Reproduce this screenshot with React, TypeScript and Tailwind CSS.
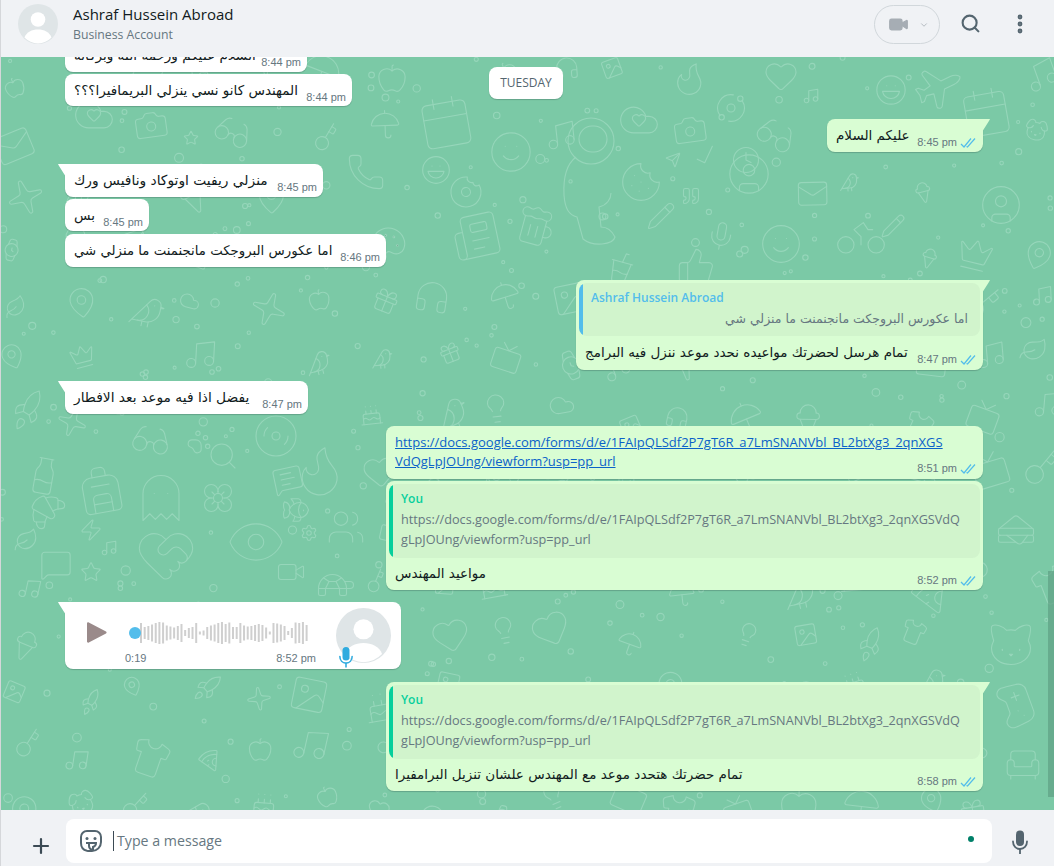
import React from "react";
import {
  Calendar, Newspaper, Donut, Laugh, Beer, Cookie, Camera, Cloud, Heart, Orbit, Glasses, CircleUser, Pencil, Mic, ThumbsUp, Music, Send, Check, CupSoda, Quote, Smile, Milk, Backpack, Croissant, Ghost, PawPrint, Search, Flower, MessageSquareText, Fish, Users, Settings, HeartHandshake, Disc3, Eye, Zap, Leaf, MessageSquare, Star, Sparkle, Cat, Gamepad2, Armchair, Turtle, Video, Plane, Phone, Bike, Sandwich, Flame, Apple, Umbrella, Gift, Key, Lightbulb, Clock, MapPin, Rocket, Crown, Dog, Bird, Shirt, Pizza, IceCreamCone, Cake, Watch, Tv, Headphones, Image, Mail, Palette, Plus, EllipsisVertical, ChevronDown,
} from "lucide-react";

const AR = { fontFamily: '"DejaVu Sans", "Noto Sans", sans-serif' };

type D = [any, number, number, number, number];
const placed: D[] = [
  [Calendar, 445, 122, 58, -10], [Newspaper, 475, 236, 50, -12], [Donut, 465, 192, 36, -15], [Laugh, 435, 170, 32, 0], [Beer, 535, 226, 44, 15],
  [Smile, 510, 152, 46, 0], [Cookie, 640, 182, 44, 0], [Camera, 689, 130, 36, -8], [Cloud, 638, 120, 44, 0], [Heart, 638, 120, 16, 0], [Orbit, 730, 108, 32, 0],
  [Heart, 780, 76, 36, 0], [Glasses, 775, 135, 42, 30], [CircleUser, 748, 174, 46, 0], [Pencil, 660, 216, 30, 0], [Mic, 720, 236, 32, 10], [ThumbsUp, 695, 266, 40, 0],
  [Music, 810, 96, 18, 0], [Send, 672, 160, 16, 0], [Check, 705, 156, 28, -20], [CupSoda, 620, 268, 36, 15], [Quote, 690, 196, 20, 0], [Smile, 780, 244, 44, 0], [Flame, 690, 78, 40, 20],
  [Plane, 935, 88, 50, 20], [Calendar, 985, 112, 54, -10], [Laugh, 890, 90, 34, 0], [Bike, 860, 232, 56, 0], [Pencil, 892, 226, 26, 0], [Clock, 745, 160, 30, 0],
  [Milk, 43, 476, 42, 10], [Backpack, 100, 490, 54, -10], [Croissant, 47, 512, 40, 0], [Ghost, 160, 498, 54, 0], [PawPrint, 198, 442, 26, 0], [Search, 222, 456, 32, 0], [Flower, 217, 498, 36, 0], [MessageSquareText, 287, 480, 32, -12],
  [Fish, 295, 510, 30, 0], [Users, 345, 527, 40, 0], [Settings, 308, 533, 18, 0], [HeartHandshake, 165, 555, 64, 0], [Disc3, 275, 436, 48, 0], [Glasses, 150, 440, 42, 10], [Eye, 255, 542, 62, 0], [Zap, 90, 530, 24, 0], [Leaf, 25, 540, 26, 0],
  [Music, 108, 548, 18, 0], [MessageSquare, 55, 565, 34, 0], [Star, 90, 572, 22, 0], [Cat, 1010, 645, 52, 0], [Gamepad2, 1015, 705, 50, 70], [Armchair, 1022, 765, 42, 0], [Turtle, 335, 585, 42, 0], [Video, 290, 572, 30, 0],
  [Sandwich, 1015, 530, 42, 0], [Camera, 150, 125, 36, -8], [Cloud, 93, 115, 44, 0], [Heart, 93, 115, 16, 0], [Star, 190, 138, 16, 0], [Glasses, 232, 132, 40, 25], [Phone, 365, 172, 40, 0], [Flame, 320, 470, 60, 10],
  [CircleUser, 1000, 205, 44, 0],
];
const pool = [Star, Umbrella, Gift, Key, Lightbulb, MapPin, Rocket, Crown, Dog, Bird, Shirt, Pizza, IceCreamCone, Cake, Watch, Tv, Headphones, Image, Mail, Palette, Apple, Sparkle, Heart, Cloud, Leaf, Music];

function buildDoodles() {
  let seed = 17;
  const rnd = () => ((seed = (seed * 16807) % 2147483647) - 1) / 2147483646;
  const all: D[] = [...placed].map((d) => [d[0], d[1], d[2] - 57, d[3], d[4]] as D);
  for (let y = 10; y < 760; y += 56) {
    for (let x = 8; x < 1054; x += 60) {
      const s = 22 + rnd() * 20;
      const px = x + rnd() * 24;
      const py = y + rnd() * 24;
      const clash = all.some((d) => Math.hypot(d[1] - px, d[2] - py) < (d[3] + s) / 2 + 6);
      const ic = pool[Math.floor(rnd() * pool.length)];
      const r = (rnd() - 0.5) * 50;
      if (!clash) all.push([ic, px, py, s, r]);
    }
  }
  const dots: [number, number, number][] = [];
  for (let i = 0; i < 900 && dots.length < 330; i++) {
    const cx = rnd() * 1054;
    const cy = rnd() * 753;
    const r = 1.5 + rnd() * rnd() * 3.5;
    if (!all.some((d) => Math.hypot(d[1] - cx, d[2] - cy) < d[3] / 2 + 3)) dots.push([cx, cy, r]);
  }
  return { all, dots };
}
const { all, dots } = buildDoodles();

function Doodles() {
  return (
    <svg className="absolute inset-0 h-full w-full" width="1054" height="753" aria-hidden="true">
      {all.map(([Ic, x, y, s, r], i) => (
        <g key={i} transform={`translate(${x} ${y}) rotate(${r})`}>
          <Ic x={-s / 2} y={-s / 2} width={s} height={s} size={s} absoluteStrokeWidth strokeWidth={1.1} color="#96d6ba" />
        </g>
      ))}
      <g fill="none" stroke="#96d6ba" strokeWidth="1.1">
        {dots.map(([x, y, r], i) => (
          <circle key={i} cx={x} cy={y} r={r} />
        ))}
        <circle cx="590" cy="84" r="23" />
        <path d="M575 100c-8 6-13 18-12 38 1 14 5 20 13 22l6 22c10 8 30 6 32-2-4-8-10-10-14-10l-2-20c8-2 12-8 12-14" />
        <rect x="578" y="69" width="28" height="26" rx="13" />
      </g>
    </svg>
  );
}

function Ticks() {
  return (
    <svg width="16" height="11" viewBox="0 0 16 11" fill="none" stroke="#53bdeb" strokeWidth="1.25" className="ml-[3px] shrink-0">
      <path d="M1 7l3 3L11 1.5" />
      <path d="M6.5 9.5l1 .5L15 1.5" />
    </svg>
  );
}

function Time({ t, read, cls = "" }: { t: string; read?: boolean; cls?: string }) {
  return (
    <span className={`flex shrink-0 items-center whitespace-nowrap text-[11px] leading-[15px] text-[#667781] ${cls}`} style={{ fontFamily: '"Liberation Sans", sans-serif' }}>
      {t}
      {read && <Ticks />}
    </span>
  );
}

function Tail({ side, color }: { side: "l" | "r"; color: string }) {
  return side === "l" ? (
    <svg width="8" height="13" viewBox="0 0 8 13" className="absolute left-[-7px] top-0">
      <path d="M0 0h8v13L1.2 2.2C.7 1.3 .2 .6 0 0z" fill={color} />
    </svg>
  ) : (
    <svg width="8" height="13" viewBox="0 0 8 13" className="absolute right-[-7px] top-0">
      <path d="M8 0H0v13l6.8-10.8C7.3 1.3 7.8 .6 8 0z" fill={color} />
    </svg>
  );
}

function MicGlyph({ color, w, h, cls }: { color: string; w: number; h: number; cls: string }) {
  return (
    <svg width={w} height={h} viewBox="0 0 16 24" className={cls}>
      <rect x="4" y="0.500" width="8" height="15.500" rx="4" fill={color} />
      <path d="M1 11.500c0 4.500 3 7.500 7 7.500s7-3 7-7.500" fill="none" stroke={color} strokeWidth="1.800" strokeLinecap="round" />
      <path d="M8 19v5" stroke={color} strokeWidth="1.800" />
    </svg>
  );
}

const inBubble = "relative rounded-[8px] shadow-[0_1px_1px_rgba(11,20,26,0.2)] bg-white";
const outBubble = "relative self-end rounded-[8px] shadow-[0_1px_1px_rgba(11,20,26,0.2)] bg-[#d9fdd3]";

function Quote2({ name, color, bar, children, cls }: { name: string; color: string; bar: string; children: React.ReactNode; cls: string }) {
  return (
    <div className={`flex overflow-hidden rounded-[8px] bg-[#d1f4cc] ${cls}`}>
      <div className={`w-[4px] shrink-0 ${bar}`} />
      <div className="flex-1 pl-[8px] pr-[12px]">
        <div className={`pt-[5px] text-[12px] font-semibold leading-[19px] ${color}`}>{name}</div>
        {children}
      </div>
    </div>
  );
}

const URL_LINES = ["https://docs.google.com/forms/d/e/1FAIpQLSdf2P7gT6R_a7LmSNANVbl_BL2btXg3_2qnXGSVdQ", "gLpJOUng/viewform?usp=pp_url"];

function Avatar({ size }: { size: number }) {
  return (
    <svg width={size} height={size} viewBox="0 0 40 40" className="shrink-0">
      <circle cx="20" cy="20" r="20" fill="#dfe5e7" />
      <circle cx="20" cy="15.500" r="7.300" fill="#fff" />
      <path d="M6.500 33.500C8.500 28 14 25.500 20 25.500s11.500 2.500 13.500 8A20 20 0 0 1 20 39.500a20 20 0 0 1-13.500-6z" fill="#fff" />
    </svg>
  );
}

function Wave() {
  const h = [20, 12, 14, 17, 20, 22, 21, 15, 13, 11, 14, 18, 6, 10, 12, 20, 3, 5, 12, 15, 17, 20, 22, 18, 21, 12, 12, 20, 15, 13, 14, 16, 18, 16, 11, 3, 20, 19, 17, 14, 4, 10, 21, 20, 22, 16];
  return (
    <svg width="172" height="26" viewBox="0 0 172 26">
      {h.map((v, i) => (
        <rect key={i} x={1 + i * 3.68} y={13 - v / 2} width="2" height={v} fill="#cfcfcf" />
      ))}
    </svg>
  );
}

export default function App() {
  return (
    <div className="flex h-[866px] w-[1054px] flex-col overflow-hidden border-l border-[#d5d7da] bg-[#f0f2f5]" style={{ fontFamily: '"Open Sans", sans-serif' }}>
      <header className="flex h-[57px] shrink-0 items-start bg-[#f0f2f5] pl-[17px] pr-[22px]">
        <div className="pt-[4px]"><Avatar size={40} /></div>
        <div className="ml-[15px] flex-1 pt-[4px]">
          <div className="text-[15px] leading-[21px] text-[#111b21]">Ashraf Hussein Abroad</div>
          <div className="mt-[1px] text-[12.250px] leading-[18px] text-[#667781]">Business Account</div>
        </div>
        <div className="mt-[5px] flex h-[39px] w-[66px] items-center rounded-full border border-[#d1d7db] pl-[13px]">
          <Video size={21} fill="#a6adb4" color="#a6adb4" strokeWidth={1.5} />
          <ChevronDown size={10} color="#aab1b7" className="ml-[10px]" />
        </div>
        <Search size={21} color="#54656f" strokeWidth={2.400} className="ml-[20px] mt-[13px]" />
        <EllipsisVertical size={24} color="#54656f" strokeWidth={2.800} className="ml-[27px] mt-[12px]" />
      </header>

      <main className="relative flex min-h-0 flex-1 flex-col overflow-hidden bg-[#7bc9a6] pl-[64px] pr-[71px]">
        <Doodles />
        <div className="relative flex flex-col items-start">
          <div className={`${inBubble} -mt-[18px] flex h-[33px] w-[242px] items-center justify-between pl-[9px] pr-[6px]`}>
            <span dir="rtl" className="text-[13.500px] leading-[19px] text-[#111b21]" style={AR}>السلام عليكم ورحمة الله وبركاته</span>
            <Time t="8:44 pm" cls="mt-[14px]" />
          </div>
          <div className={`${inBubble} mt-[2px] flex h-[32px] w-[287px] items-center justify-between pl-[9px] pr-[6px]`}>
            <span dir="rtl" className="text-[13.500px] leading-[19px] text-[#111b21]" style={AR}>المهندس كانو نسي ينزلي البريمافيرا؟؟؟</span>
            <Time t="8:44 pm" cls="mt-[14px]" />
          </div>

          <div className={`${outBubble} mt-[13px] flex h-[33px] w-[156px] items-center justify-between rounded-tr-none pl-[9px] pr-[7px]`}>
            <Tail side="r" color="#d9fdd3" />
            <span dir="rtl" className="text-[13.500px] leading-[19px] text-[#111b21]" style={AR}>عليكم السلام</span>
            <Time t="8:45 pm" read cls="mt-[14px]" />
          </div>

          <div className={`${inBubble} mt-[12px] flex h-[33px] w-[258px] items-center justify-between rounded-tl-none pl-[9px] pr-[6px]`}>
            <Tail side="l" color="#ffffff" />
            <span dir="rtl" className="text-[13.800px] leading-[19px] text-[#111b21]" style={AR}>منزلي ريفيت اوتوكاد ونافيس ورك</span>
            <Time t="8:45 pm" cls="mt-[14px]" />
          </div>
          <div className={`${inBubble} mt-[2px] flex h-[32px] w-[84px] items-center justify-between pl-[9px] pr-[6px]`}>
            <span dir="rtl" className="text-[13.500px] leading-[19px] text-[#111b21]" style={AR}>بس</span>
            <Time t="8:45 pm" cls="mt-[14px]" />
          </div>
          <div className={`${inBubble} mt-[3px] flex h-[33px] w-[321px] items-center justify-between pl-[9px] pr-[6px]`}>
            <span dir="rtl" className="text-[13.300px] leading-[19px] text-[#111b21]" style={AR}>اما عكورس البروجكت مانجنمنت ما منزلي شي</span>
            <Time t="8:46 pm" cls="mt-[14px]" />
          </div>

          <div className={`${outBubble} mt-[13px] h-[90px] w-[407px] rounded-tr-none p-[3px]`}>
            <Tail side="r" color="#d9fdd3" />
            <Quote2 name="Ashraf Hussein Abroad" color="text-[#53bdeb]" bar="bg-[#53bdeb]" cls="h-[53px]">
              <div dir="rtl" className="pt-[2px] text-[12.500px] leading-[19px] text-[#667781]" style={AR}>اما عكورس البروجكت مانجنمنت ما منزلي شي</div>
            </Quote2>
            <div className="flex items-start justify-between pl-[6px] pr-[4px] pt-[7px]">
              <span dir="rtl" className="text-[13.500px] leading-[19px] text-[#111b21]" style={AR}>تمام هرسل لحضرتك مواعيده نحدد موعد ننزل فيه البرامج</span>
              <Time t="8:47 pm" read cls="mt-[9px]" />
            </div>
          </div>

          <div className={`${inBubble} mt-[11px] flex h-[33px] w-[243px] items-center justify-between rounded-tl-none pl-[9px] pr-[6px]`}>
            <Tail side="l" color="#ffffff" />
            <span dir="rtl" className="text-[13.800px] leading-[19px] text-[#111b21]" style={AR}>يفضل اذا فيه موعد بعد الافطار</span>
            <Time t="8:47 pm" cls="mt-[14px]" />
          </div>

          <div className={`${outBubble} mt-[12px] h-[53px] w-[597px] pl-[9px] pr-[7px] pt-[7px]`}>
            <div className="text-[13px] leading-[19px] text-[#0b62c9] underline">
              https://docs.google.com/forms/d/e/1FAIpQLSdf2P7gT6R_a7LmSNANVbl_BL2btXg3_2qnXGS
              <br />
              VdQgLpJOUng/viewform?usp=pp_url
            </div>
            <div className="absolute bottom-[3px] right-[7px]"><Time t="8:51 pm" read /></div>
          </div>

          <div className={`${outBubble} mt-[2px] h-[109px] w-[597px] p-[3px]`}>
            <Quote2 name="You" color="text-[#06cf9c]" bar="bg-[#06cf9c]" cls="h-[74px]">
              <div className="pt-[1px] text-[12.680px] leading-[20px] text-[#667781]">{URL_LINES[0]}<br />{URL_LINES[1]}</div>
            </Quote2>
            <div className="flex items-start justify-between pl-[6px] pr-[4px] pt-[6px]">
              <span dir="rtl" className="text-[13.500px] leading-[19px] text-[#111b21]" style={AR}>مواعيد المهندس</span>
              <Time t="8:52 pm" read cls="mt-[9px]" />
            </div>
          </div>

          <div className={`${inBubble} mt-[12px] flex h-[67px] w-[336px] rounded-tl-none pl-[22px]`}>
            <Tail side="l" color="#ffffff" />
            <svg width="20" height="21" viewBox="0 0 20 21" className="mt-[20px] shrink-0">
              <path d="M0 1.500C0 .5 1 0 1.800 .5L19 9.500c.8.500 .8 1.500 0 2L1.800 20.500C1 21 0 20.500 0 19.500z" fill="#9a8a8a" />
            </svg>
            <div className="relative ml-[18px] w-[191px]">
              <div className="absolute left-[14px] top-[18px]"><Wave /></div>
              <div className="absolute left-[4px] top-[25px] h-[12px] w-[12px] rounded-full bg-[#53bdeb]" />
              <div className="absolute bottom-[3px] left-0 right-0 flex items-center justify-between">
                <Time t="0:19" cls="text-[10.500px]" />
                <Time t="8:52 pm" />
              </div>
            </div>
            <div className="relative ml-[20px] mt-[6px]">
              <Avatar size={55} />
              <MicGlyph color="#2fabdf" w={14} h={22} cls="absolute bottom-[1px] left-[3px]" />
            </div>
          </div>

          <div className={`${outBubble} mt-[13px] h-[109px] w-[597px] rounded-tr-none p-[3px]`}>
            <Tail side="r" color="#d9fdd3" />
            <Quote2 name="You" color="text-[#06cf9c]" bar="bg-[#06cf9c]" cls="h-[74px]">
              <div className="pt-[1px] text-[12.680px] leading-[20px] text-[#667781]">{URL_LINES[0]}<br />{URL_LINES[1]}</div>
            </Quote2>
            <div className="flex items-start justify-between pl-[6px] pr-[4px] pt-[6px]">
              <span dir="rtl" className="text-[13.500px] leading-[19px] text-[#111b21]" style={AR}>تمام حضرتك هتحدد موعد مع المهندس علشان تنزيل البرامفيرا</span>
              <Time t="8:58 pm" read cls="mt-[9px]" />
            </div>
          </div>
        </div>

        <div className="absolute left-[488px] top-[10px] flex h-[32px] w-[74px] items-center justify-center rounded-[8px] bg-white text-[12px] text-[#54656f] shadow-[0_1px_1px_rgba(11,20,26,0.2)]">TUESDAY</div>
        <div className="absolute bottom-[13px] right-0 h-[226px] w-[6px] bg-[#5f9f85]/70" />
      </main>

      <footer className="flex h-[56px] shrink-0 items-center bg-[#f0f2f5] pl-[28px] pr-[20px]">
        <Plus size={24} color="#3b4a54" strokeWidth={2.200} className="mt-[16px]" />
        <div className="ml-[13px] mt-[6px] flex h-[44px] w-[926px] items-center rounded-[8px] bg-white pl-[13px] pr-[18px]">
          <svg width="24" height="24" viewBox="0 0 24 24" fill="none" stroke="#54656f" strokeWidth="2" className="shrink-0">
            <path d="M8 2h8a6 6 0 0 1 6 6v5c0 5-4 9-9 9H9l-1-.2C4.500 21 2 18 2 14V8a6 6 0 0 1 6-6z" />
            <circle cx="8" cy="9.500" r="1.500" fill="#54656f" stroke="none" />
            <circle cx="16" cy="9.500" r="1.500" fill="#54656f" stroke="none" />
            <path d="M7 14h10c0 2-1.500 3.500-3 4v3M10 14v3c0 2 1 3 3 4" />
          </svg>
          <div className="ml-[10px] h-[20px] w-px bg-[#3b4a54]" />
          <span className="ml-[3px] flex-1 text-[14.200px] text-[#667781]">Type a message</span>
          <div className="-mt-[4px] h-[6px] w-[6px] rounded-full bg-[#008069]" />
        </div>
        <MicGlyph color="#54656f" w={16} h={24} cls="ml-[20px] mt-[7px]" />
      </footer>
    </div>
  );
}
